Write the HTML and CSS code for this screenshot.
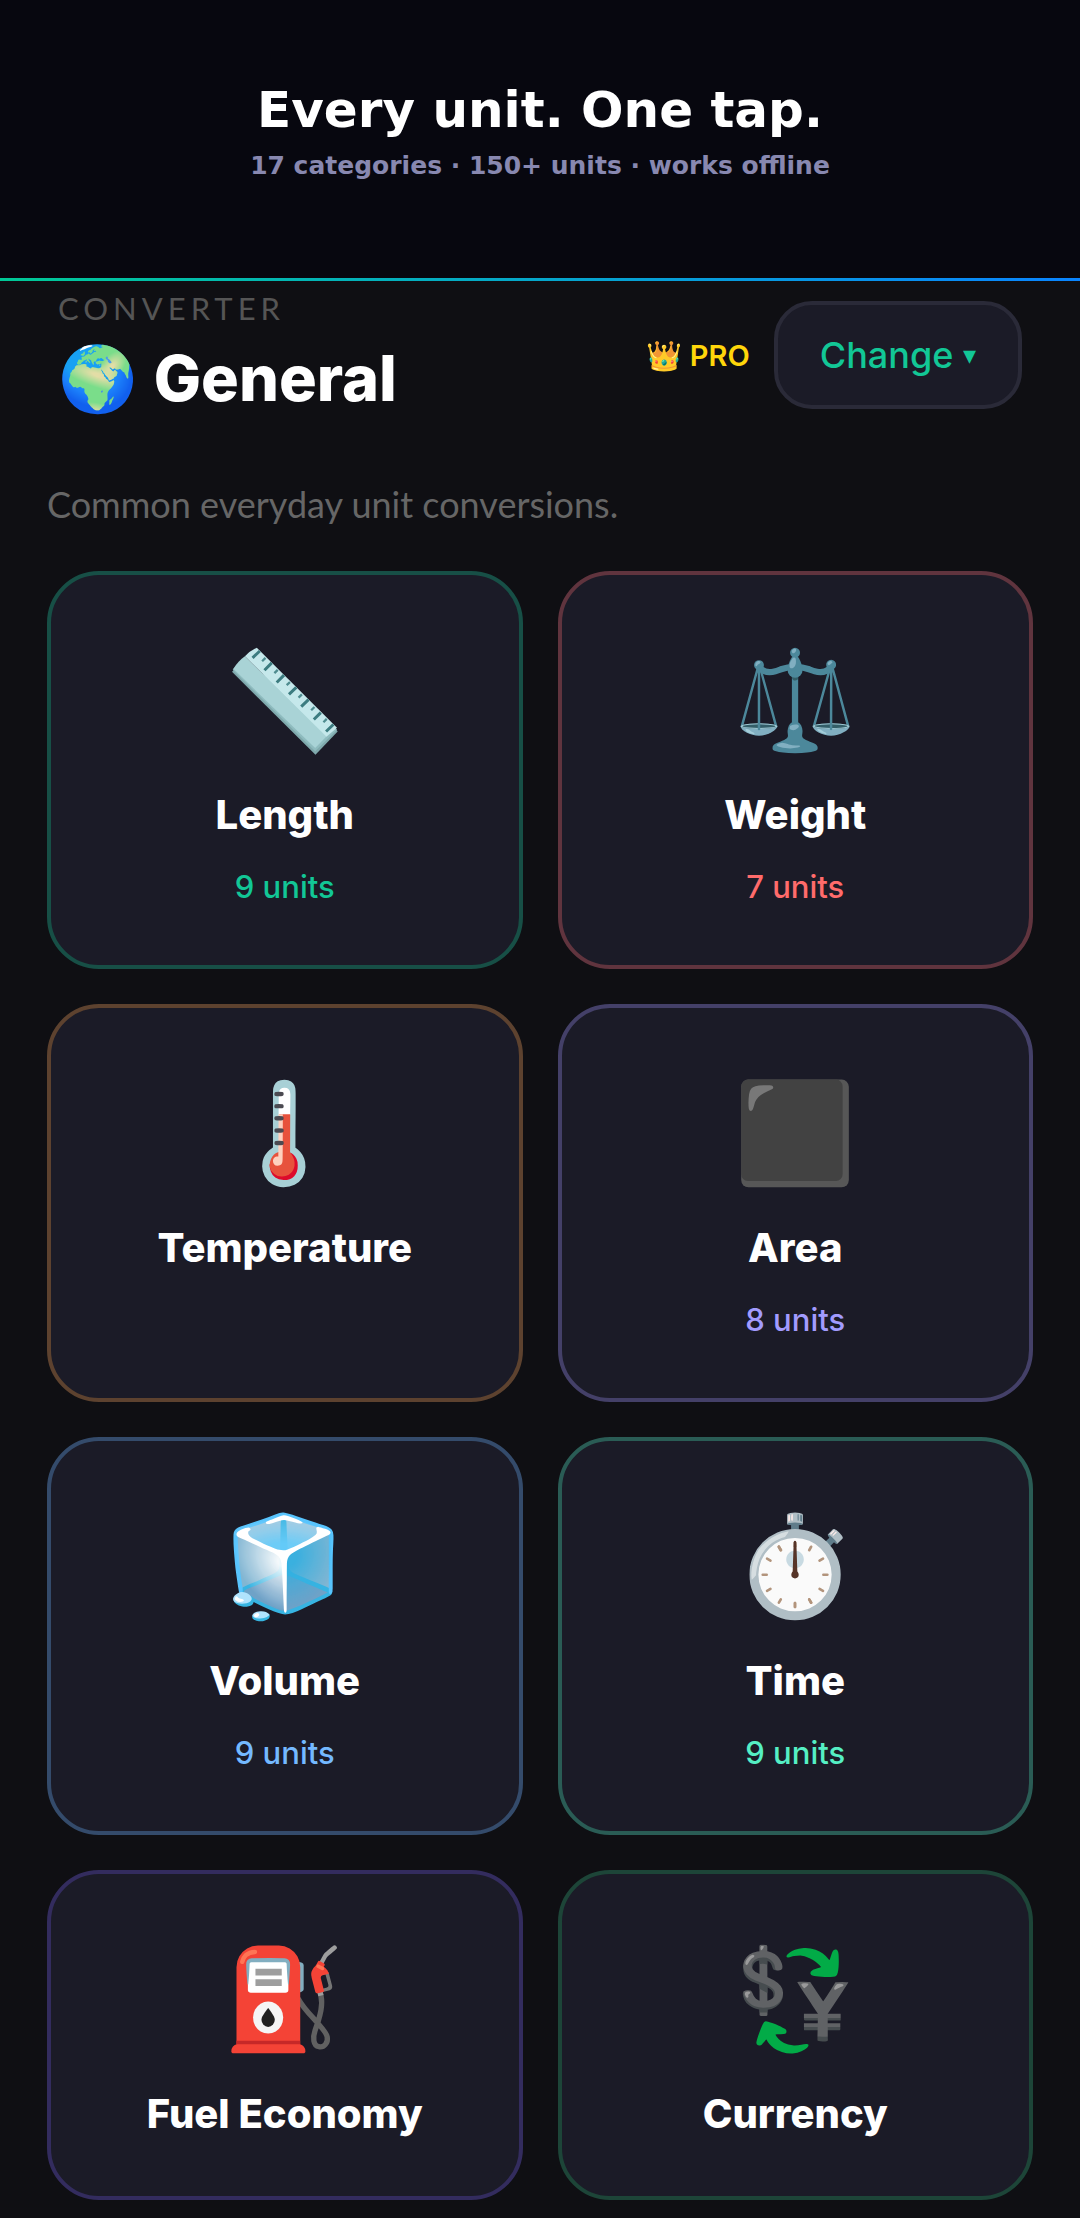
FILE: index.html
```html
<!DOCTYPE html>
<html lang="en">
<head>
    <meta charset="UTF-8">
    <meta name="viewport" content="width=device-width, initial-scale=1.0">
    <title>Unit Converter</title>
    <link rel="stylesheet" href="styles.css">
</head>
<body>
    <div class="hero">
        <h1>Every unit. One tap.</h1>
        <p>17 categories · 150+ units · works offline</p>
    </div>

    <header class="header">
        <div class="header-left">
            <div class="eyebrow">CONVERTER</div>
            <h2><span class="globe">🌍</span> General</h2>
        </div>
        <div class="header-right">
            <a href="#pro" class="pro">👑 PRO</a>
            <button type="button" class="change">Change <span class="arrow">▾</span></button>
        </div>
    </header>

    <main>
        <p class="description">Common everyday unit conversions.</p>

        <div class="grid">
            <button type="button" class="card length">
                <span class="icon">
                    <svg class="ruler" viewBox="92 80 322 326" aria-hidden="true">
                        <path fill="#7fa9ac" d="M93 155 L345 405 L412 335 L398 316 L130 120 Z"/>
                        <path fill="#8fbcbf" d="M95 149 L344 395 L410 330 L400 318 L125 118 Z"/>
                        <path fill="#a9d3d6" d="M97 146 Q112 122 132 108 L378 350 L344 385 Z"/>
                        <path fill="#c5e8eb" d="M132 108 Q148 91 168 82 L410 324 L378 351 Z"/>
                        <g stroke="#3c7c80" stroke-width="9">
                            <path d="M155 113 L177 92 M191 150 L213 128 M228 187 L250 165 M265 223 L287 202 M302 260 L324 239 M340 299 L361 278 M377 335 L399 314"/>
                        </g>
                        <g stroke="#4f8c90" stroke-width="7">
                            <path d="M184 123 L194 113 M221 159 L231 149 M258 195 L268 186 M294 233 L304 223 M332 271 L342 261 M369 307 L379 297"/>
                        </g>
                    </svg>
                </span>
                <span class="name">Length</span>
                <span class="units">9 units</span>
            </button>
            <button type="button" class="card weight">
                <span class="icon">⚖️</span>
                <span class="name">Weight</span>
                <span class="units">7 units</span>
            </button>
            <button type="button" class="card temperature">
                <span class="icon">🌡️</span>
                <span class="name">Temperature</span>
            </button>
            <button type="button" class="card area">
                <span class="icon">⬛</span>
                <span class="name">Area</span>
                <span class="units">8 units</span>
            </button>
            <button type="button" class="card volume">
                <span class="icon">🧊</span>
                <span class="name">Volume</span>
                <span class="units">9 units</span>
            </button>
            <button type="button" class="card time">
                <span class="icon">⏱️</span>
                <span class="name">Time</span>
                <span class="units">9 units</span>
            </button>
            <button type="button" class="card fuel">
                <span class="icon">⛽</span>
                <span class="name">Fuel Economy</span>
            </button>
            <button type="button" class="card currency">
                <span class="icon">💱</span>
                <span class="name">Currency</span>
            </button>
        </div>
    </main>
</body>
</html>
```
FILE: styles.css
```css
* {
    box-sizing: border-box;
}

body {
    margin: 0;
    background-color: #0f0f13;
    color: #fff;
    font-family: Inter, "Noto Color Emoji", sans-serif;
}

h1, h2, p {
    margin: 0;
}

button {
    font-family: inherit;
    cursor: pointer;
}

/* Top banner */
.hero {
    padding: 79px 20px 97px;
    border-bottom: 3px solid;
    border-image: linear-gradient(90deg, #00c896, #0a84ff) 1;
    background-color: #07070f;
    text-align: center;
    font-family: "DejaVu Sans", sans-serif;
    font-weight: bold;
}

.hero h1 {
    font-size: 50px;
    line-height: 62px;
}

.hero p {
    margin-top: 10px;
    font-size: 25px;
    line-height: 30px;
    color: #8888b0;
}

/* Header */
.header {
    display: flex;
    justify-content: space-between;
    align-items: center;
    padding: 9px 58px 0;
}

.eyebrow {
    font-family: Lato, sans-serif;
    font-size: 31px;
    line-height: 36px;
    letter-spacing: 5px;
    color: #555;
}

.header h2 {
    display: flex;
    align-items: center;
    gap: 16px;
    margin-top: 12px;
    font-size: 63px;
    font-weight: 800;
    line-height: 80px;
}

.globe {
    font-size: 64px;
}

.header-right {
    display: flex;
    align-items: center;
    gap: 24px;
    padding-top: 2px;
}

.pro {
    font-size: 29px;
    font-weight: 600;
    color: #ffd60a;
    text-decoration: none;
}

.change {
    padding: 24px 42px;
    border: 4px solid #2a2a38;
    border-radius: 38px;
    background-color: #1b1b27;
    color: #12c796;
    font-size: 36px;
    font-weight: 500;
    line-height: 51px;
}

.arrow {
    font-size: 26px;
    vertical-align: 4px;
}

/* Categories */
main {
    padding: 64px 47px 14px;
}

.description {
    font-family: Lato, sans-serif;
    font-size: 36px;
    line-height: 44px;
    color: #666;
}

.grid {
    display: grid;
    grid-template-columns: 1fr 1fr;
    gap: 35px;
    margin-top: 45px;
}

.card {
    display: flex;
    flex-direction: column;
    align-items: center;
    padding: 57px 20px 54px;
    border: 4px solid;
    border-radius: 52px;
    background-color: #1b1b27;
}

.icon {
    display: flex;
    align-items: center;
    height: 133px;
    font-size: 98px;
    line-height: 133px;
}

.ruler {
    width: 108px;
    height: 108px;
    margin-top: 4px;
}

.name {
    margin-top: 22px;
    font-size: 40px;
    font-weight: 800;
    line-height: 56px;
    color: #fff;
}

.units {
    margin-top: 20px;
    font-size: 31px;
    font-weight: 500;
    line-height: 48px;
}

.length { border-color: #174f46; }
.length .units { color: #12c796; }

.weight { border-color: #60343e; }
.weight .units { color: #ff6b6b; }

.temperature { border-color: #5d422f; }

.area { border-color: #444068; }
.area .units { color: #a29bfe; }

.volume { border-color: #344b6b; }
.volume .units { color: #74b9ff; }

.time { border-color: #2a5c55; }
.time .units { color: #55efc4; }

.fuel { border-color: #332c5e; }

.currency { border-color: #1d4538; }
```
